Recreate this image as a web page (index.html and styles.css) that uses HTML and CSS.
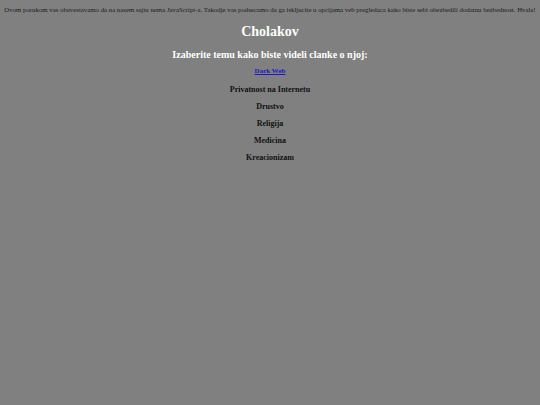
FILE: index.html
```html
<!DOCTYPE html>
<html>
<head>
<meta charset="utf-8">
<link rel="stylesheet" href="styles.css">
</head>
<body>
<p class="notice">Ovom porukom vas obavestavamo da na nasem sajtu nema JavaScript-a. Takodje vas podsecamo da ga iskljucite u opcijama veb pregledaca kako biste sebi obezbedili dodatnu bezbednost. Hvala!</p>
<h1 class="title">Cholakov</h1>
<h2 class="subtitle">Izaberite temu kako biste videli clanke o njoj:</h2>
<nav class="topics">
<a class="topic-link" href="#">Dark Web</a>
<span class="topic">Privatnost na Internetu</span>
<span class="topic">Drustvo</span>
<span class="topic">Religija</span>
<span class="topic">Medicina</span>
<span class="topic">Kreacionizam</span>
</nav>
</body>
</html>
```
FILE: styles.css
```css
html, body {
  margin: 0;
  padding: 0;
  background: #808080;
}
body {
  font-family: "Liberation Serif", "Times New Roman", serif;
  padding: 5px 4px;
  text-align: center;
  color: #000;
}
.notice {
  margin: 0;
  font-size: 6.8px;
  line-height: 10px;
  color: #1a1a1a;
  white-space: nowrap;
}
.title {
  margin: 8px 0 0;
  font-size: 14px;
  line-height: 18px;
  color: #fff;
}
.subtitle {
  margin: 7px 0 0;
  font-size: 10px;
  line-height: 13px;
  color: #fff;
}
.topics {
  display: flex;
  flex-direction: column;
  align-items: center;
  margin-top: 6px;
  gap: 7px;
}
.topic-link {
  font-size: 7px;
  line-height: 8px;
  font-weight: bold;
  color: #1a1acc;
  margin-bottom: 3px;
}
.topic {
  font-size: 8px;
  line-height: 10px;
  font-weight: bold;
  color: #111;
}
```
